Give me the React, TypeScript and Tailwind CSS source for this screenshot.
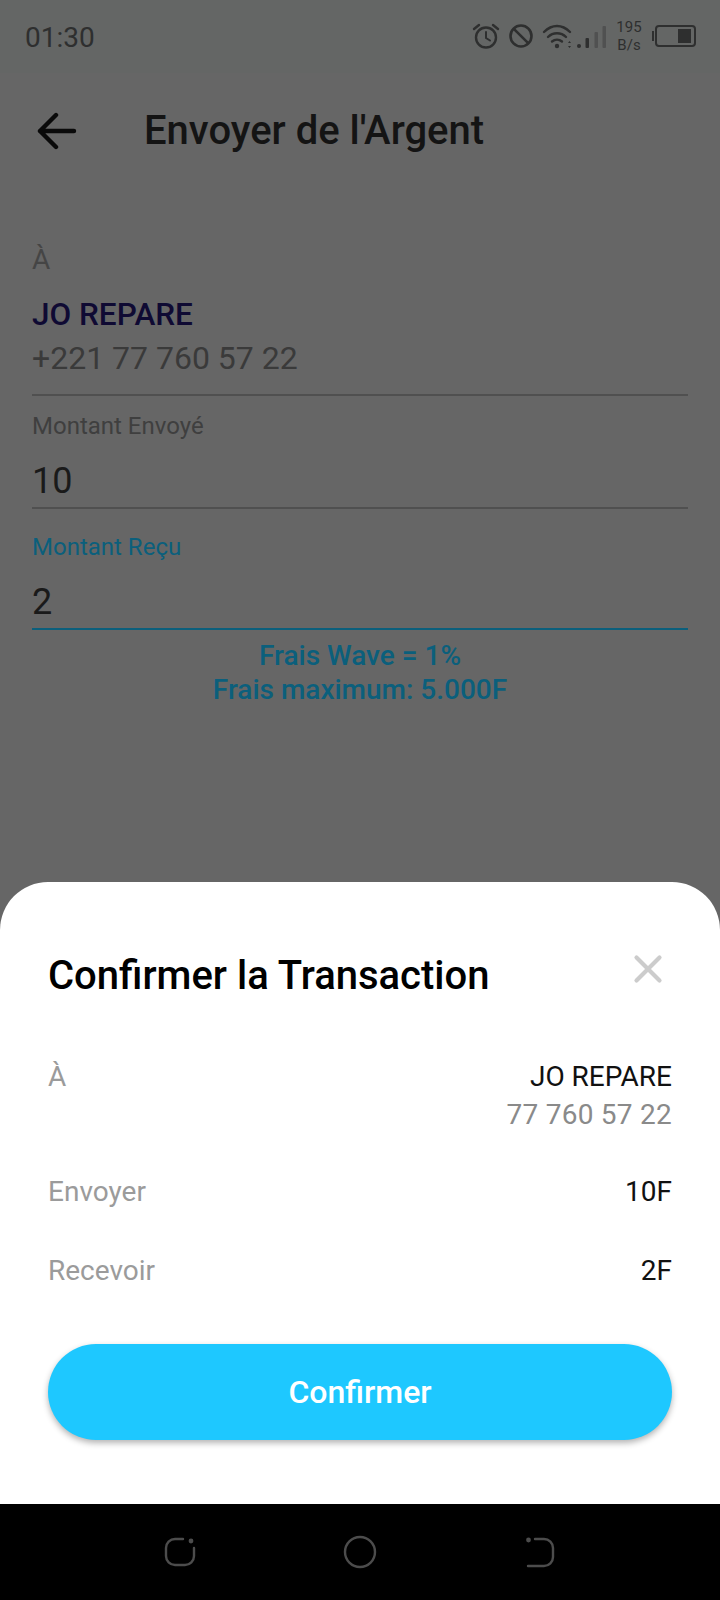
import { X } from "lucide-react";

const roboto = { fontFamily: "Roboto, sans-serif" };

function StatusIcons() {
  return (
    <div className="flex items-center">
      <svg width="30" height="28" viewBox="0 0 30 28" fill="none" stroke="#2e2f2f" strokeWidth="2.4" strokeLinecap="round">
        <circle cx="15" cy="15.5" r="10" />
        <path d="M15 10v6l4 2.5" strokeWidth="2" />
        <path d="M3 7l5-4M27 7l-5-4" />
      </svg>
      <svg className="ml-[7px]" width="26" height="26" viewBox="0 0 26 26" fill="none" stroke="#2e2f2f" strokeWidth="2.6">
        <circle cx="13" cy="13" r="10.5" />
        <path d="M5.8 5.8l14.4 14.4" />
      </svg>
      <svg className="ml-[8px]" width="66" height="26" viewBox="0 0 66 26" fill="none">
        <path d="M2 9c8-8 18-8 26 0M6 14c5-5 13-5 18 0M10 18.500c3-2.500 7-2.500 10 0" stroke="#2e2f2f" strokeWidth="2.400" strokeLinecap="round" />
        <circle cx="15" cy="23" r="2.200" fill="#2e2f2f" />
        <path d="M26 20l1.500-2 1.500 2zM26 23l1.500 2 1.500-2z" fill="#2e2f2f" />
        <circle cx="37" cy="23" r="2" fill="#2e2f2f" />
        <rect x="43.500" y="15" width="3.500" height="10" rx="1" fill="#2e2f2f" />
        <rect x="52.500" y="9" width="3.500" height="16" rx="1" fill="#505151" />
        <rect x="60.500" y="3" width="3.500" height="22" rx="1" fill="#505151" />
      </svg>
    </div>
  );
}

function Battery() {
  return (
    <div className="flex items-center">
      <div className="h-[10px] w-[2px] bg-[#2e2f2f]" />
      <div className="ml-px flex h-[22px] w-[41px] items-center justify-end rounded-[4px] border-2 border-[#2e2f2f] p-[2px] pr-[3px]">
        <div className="h-[14px] w-[13px] bg-[#2e2f2f]" />
      </div>
    </div>
  );
}

function Row({ label, children, className = "" }: { label: string; children: React.ReactNode; className?: string }) {
  return (
    <div className={`flex items-start justify-between ${className}`}>
      <span className="text-[28px] leading-[38px] text-[#9b9b9b]">{label}</span>
      <div className="text-right text-[28px] leading-[38px] text-[#111111]">{children}</div>
    </div>
  );
}

export default function App() {
  return (
    <div className="relative flex h-[1600px] w-[720px] flex-col overflow-hidden bg-[#666666]" style={roboto}>
      <div className="flex h-[73px] items-center justify-between bg-[#646665] pl-[25px] pr-[24px]">
        <span className="mt-[3px] text-[28px] text-[#2e2f2f]">01:30</span>
        <div className="-mt-[1px] flex items-center">
          <StatusIcons />
          <div className="ml-[7px] w-[28px] text-center text-[15px] leading-[18px] text-[#2e2f2f]">
            195
            <br />
            B/s
          </div>
          <div className="ml-[9px]">
            <Battery />
          </div>
        </div>
      </div>

      <div className="flex h-[116px] items-center pl-[37px]">
        <svg width="40" height="38" viewBox="0 0 40 38" fill="none" stroke="#0a0a0a" strokeWidth="4.4" strokeLinecap="round" strokeLinejoin="round">
          <path d="M3 19H37M19 3L3 19L19 35" />
        </svg>
        <span className="ml-[67px] text-[40px] font-medium text-[#141414]">Envoyer de l'Argent</span>
      </div>

      <div className="px-[32px] pt-[52px]">
        <div className="text-[28px] leading-[38px] text-[#454545]">À</div>
        <div className="mt-[17px] text-[31.500px] font-medium leading-[38px] text-[#0f0a33]">JO REPARE</div>
        <div className="mt-[2px] text-[32px] leading-[44px] text-[#3a3a3a]">+221 77 760 57 22</div>
        <div className="mt-[14px] h-[2px] bg-[#505050]" />
        <div className="mt-[15px] text-[24px] leading-[30px] text-[#3f3f3f]">Montant Envoyé</div>
        <div className="mt-[14px] text-[36px] leading-[52px] text-[#1a1a1a]">10</div>
        <div className="h-[2px] bg-[#505050]" />
        <div className="mt-[23px] text-[24px] leading-[30px] text-[#0b5f7c]">Montant Reçu</div>
        <div className="mt-[14px] text-[36px] leading-[52px] text-[#1a1a1a]">2</div>
        <div className="h-[2px] bg-[#0b5f7c]" />
        <div className="mt-[9px] text-center text-[28px] font-medium leading-[34px] text-[#0b5f7c]">
          Frais Wave = 1%
          <br />
          Frais maximum: 5.000F
        </div>
      </div>

      <div className="absolute inset-x-0 bottom-[96px] h-[622px] rounded-t-[48px] bg-white px-[48px]">
        <div className="flex items-center justify-between pr-[8px] pt-[71px]">
          <span className="text-[40px] font-medium leading-[46px] text-black">Confirmer la Transaction</span>
          <X size={46} strokeWidth={2.200} className="-mt-[14px] -mr-[7px] text-[#cccccc]" />
        </div>
        <div className="mt-[59px]">
          <Row label="À">
            JO REPARE
            <div className="tracking-[0.250px] text-[#8a8a8a]">77 760 57 22</div>
          </Row>
          <Row label="Envoyer" className="mt-[39px]">
            10F
          </Row>
          <Row label="Recevoir" className="mt-[41px]">
            2F
          </Row>
        </div>
        <button className="mt-[54px] flex h-[96px] w-[624px] items-center justify-center rounded-[48px] bg-[#1ec8ff] text-[32px] font-medium text-white shadow-[0_3px_6px_rgba(0,0,0,0.3)]">
          Confirmer
        </button>
      </div>

      <div className="absolute inset-x-0 bottom-0 flex h-[96px] items-center justify-between bg-black pl-[163px] pr-[164px]">
        <svg width="33" height="32" viewBox="0 0 33 32" fill="none" stroke="#4c4c4c" strokeWidth="2.400" strokeLinecap="round">
          <path d="M20 3H12a9 9 0 0 0-9 9v8a9 9 0 0 0 9 9h10a9 9 0 0 0 9-9v-8" />
          <circle cx="28" cy="5" r="1.200" fill="#4c4c4c" />
        </svg>
        <svg width="34" height="34" viewBox="0 0 34 34" fill="none" stroke="#4c4c4c" strokeWidth="2.400">
          <circle cx="17" cy="17" r="15" />
        </svg>
        <svg width="32" height="32" viewBox="0 0 32 32" fill="none" stroke="#4c4c4c" strokeWidth="2.400" strokeLinecap="round">
          <path d="M11 3h9a9 9 0 0 1 9 9v9a9 9 0 0 1-9 9H4" />
          <circle cx="4.500" cy="4" r="1.200" fill="#4c4c4c" />
        </svg>
      </div>
    </div>
  );
}
